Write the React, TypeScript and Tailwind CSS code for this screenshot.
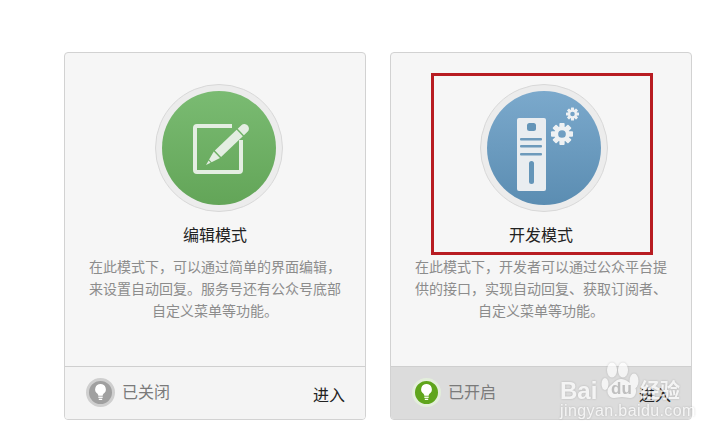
const Gear = ({ cx, cy, r }: { cx: number; cy: number; r: number }) => {
  const teeth = [0, 45, 90, 135, 180, 225, 270, 315]
  return (
    <g fill="#eef1f3">
      {teeth.map((a) => (
        <rect
          key={a}
          x={cx - r * 0.24}
          y={cy - r}
          width={r * 0.48}
          height={r * 0.5}
          rx={r * 0.08}
          transform={`rotate(${a} ${cx} ${cy})`}
        />
      ))}
      <circle cx={cx} cy={cy} r={r * 0.52} fill="none" stroke="#eef1f3" strokeWidth={r * 0.34} />
    </g>
  )
}

const PencilIcon = () => (
  <svg width="114" height="114" viewBox="0 0 114 114" className="block">
    <path
      d="M70 35H35a2 2 0 0 0-2 2V79a2 2 0 0 0 2 2h42a2 2 0 0 0 2-2V49"
      fill="none"
      stroke="#e4eee2"
      strokeWidth="4"
      strokeLinejoin="round"
    />
    <g transform="translate(44 74) rotate(-43.500)" fill="#e4eee2">
      <path d="M0 0L5 -1.500V1.500z" />
      <path d="M6 -1.800L15 -4.500V4.500L6 1.800z" />
      <rect x="16.500" y="-4.500" width="30" height="9" />
      <path d="M48 -4.500H53a4.500 4.500 0 0 1 0 9H48z" />
    </g>
  </svg>
)

const ServerIcon = () => (
  <svg width="114" height="114" viewBox="0 0 114 114" className="block">
    <rect x="30" y="27" width="29" height="73" rx="2" fill="#e9edf0" />
    <rect x="40" y="32" width="9" height="8" rx="2.500" fill="#6495b8" />
    <rect x="33" y="47" width="22" height="2.500" rx="1" fill="#6d9abb" />
    <rect x="33" y="54" width="22" height="2.500" rx="1" fill="#6d9abb" />
    <rect x="33" y="62" width="22" height="2.500" rx="1" fill="#6d9abb" />
    <rect x="42" y="70" width="5" height="23" rx="2.500" fill="#6495b8" />
    <Gear cx={75} cy={43} r={11} />
    <Gear cx={85.500} cy={23} r={6.500} />
  </svg>
)

const Bulb = ({ on }: { on: boolean }) => (
  <div
    className={`flex h-[29px] w-[29px] items-center justify-center rounded-full border-[3px] ${
      on ? "border-[#e3eedb] bg-[#5fa51c]" : "border-[#cfcfcf] bg-[#a0a0a0]"
    }`}
  >
    <svg width="15" height="19" viewBox="0 0 15 19">
      <path
        d="M7.500 1a5.300 5.300 0 0 0-3 9.700c.6.500.8 1.200.8 2h4.400c0-.8.2-1.500.8-2a5.300 5.300 0 0 0-3-9.700z"
        fill="#fff"
      />
      <rect x="5.300" y="13.600" width="4.400" height="1.300" fill="#fff" />
      <rect x="5.800" y="15.700" width="3.400" height="1.300" fill="#fff" />
    </svg>
  </div>
)

const Card = ({ icon, circle, title, lines, on, status, offset }: {
  icon: React.ReactNode
  circle: string
  title: string
  lines: string[]
  on: boolean
  status: string
  offset: string
}) => (
  <div className="flex h-[368px] w-[302px] flex-col overflow-hidden rounded-[4px] border border-[#d2d2d2] bg-[#f6f6f6]">
    <div className="flex flex-1 flex-col items-center pt-[31px]">
      <div className={`${offset} rounded-full border border-[#d8d8d8] bg-[#ececec] p-[6px]`}>
        <div className={`overflow-hidden rounded-full ${circle}`}>{icon}</div>
      </div>
      <h2 className="mt-[10px] text-[16px] leading-[24px] font-normal text-[#222222]">{title}</h2>
      <div className="mt-[9px] text-center text-[14px] leading-[22px] text-[#8c8c8c]">
        {lines.map((line) => (
          <p key={line} className="whitespace-nowrap">{line}</p>
        ))}
      </div>
    </div>
    <div
      className={`flex h-[53px] items-start border-t border-[#cfcfcf] pr-[20px] pl-[21px] ${
        on ? "bg-[#dcdcdc]" : "bg-[#f4f4f4]"
      }`}
    >
      <div className="mt-[11px] flex items-center gap-[7px]">
        <Bulb on={on} />
        <span className="-mt-[3px] text-[16px] leading-[24px] text-[#7a7a7a]">{status}</span>
      </div>
      <a className="mt-[15px] ml-auto text-[16px] leading-[24px] text-[#222222]">进入</a>
    </div>
  </div>
)

// translucent watermark, sits over the footer of the second card
const Watermark = () => (
  <div className="absolute top-[358px] left-[556px] h-[62px] w-[134px] text-white opacity-70 drop-shadow-[0_0_1px_rgba(0,0,0,0.25)]">
    <span className="absolute top-[15px] left-[4px] font-['Liberation_Sans',sans-serif] text-[24px] leading-[36px] font-bold">Bai</span>
    <svg width="42" height="42" viewBox="0 0 42 42" className="absolute top-[1px] left-[44px]">
      <ellipse cx="5" cy="25" rx="3.500" ry="6" fill="#fff" />
      <ellipse cx="12" cy="11" rx="5" ry="7.500" fill="#fff" />
      <ellipse cx="23" cy="11" rx="5" ry="7.500" fill="#fff" />
      <ellipse cx="34" cy="22" rx="4.500" ry="7.500" fill="#fff" />
      <path d="M21 20c-5 0-7 4-11 7-5 4-2 12 4 12 3 0 5-1 8-1s5 1 8 1c6 0 8-8 4-12-4-3-8-7-13-7z" fill="#fff" />
    </svg>
    <span className="absolute top-[23px] left-[55px] font-['Liberation_Sans',sans-serif] text-[17px] leading-[16px] font-bold text-[#b4b4b4]">du</span>
    <span className="absolute top-[17px] left-[84px] font-['Noto_Sans_CJK_SC',sans-serif] text-[20px] leading-[30px] font-bold whitespace-nowrap">经验</span>
    <span className="absolute top-[44px] left-[4px] font-['Liberation_Sans',sans-serif] text-[16px] leading-[18px] tracking-[0.4px] whitespace-nowrap">jingyan.baidu.com</span>
  </div>
)

export default function App() {
  return (
    <div className="relative h-[438px] w-[726px] overflow-hidden bg-white font-['Noto_Sans_CJK_SC','Liberation_Sans',sans-serif]">
      <div className="flex gap-[24px] pt-[52px] pl-[64px]">
        <Card
          icon={<PencilIcon />}
          offset="ml-[7px]"
          circle="bg-gradient-to-b from-[#7abb72] to-[#63a558]"
          title="编辑模式"
          lines={["在此模式下，可以通过简单的界面编辑，", "来设置自动回复。服务号还有公众号底部", "自定义菜单等功能。"]}
          on={false}
          status="已关闭"
        />
        <Card
          icon={<ServerIcon />}
          offset="ml-[6px]"
          circle="bg-gradient-to-b from-[#7ba9cc] to-[#5b8db2]"
          title="开发模式"
          lines={["在此模式下，开发者可以通过公众平台提", "供的接口，实现自动回复、获取订阅者、", "自定义菜单等功能。"]}
          on
          status="已开启"
        />
      </div>
      <div className="absolute top-[73px] left-[431px] h-[182px] w-[222px] border-[3px] border-[#b81c22]" />
      <Watermark />
    </div>
  )
}
